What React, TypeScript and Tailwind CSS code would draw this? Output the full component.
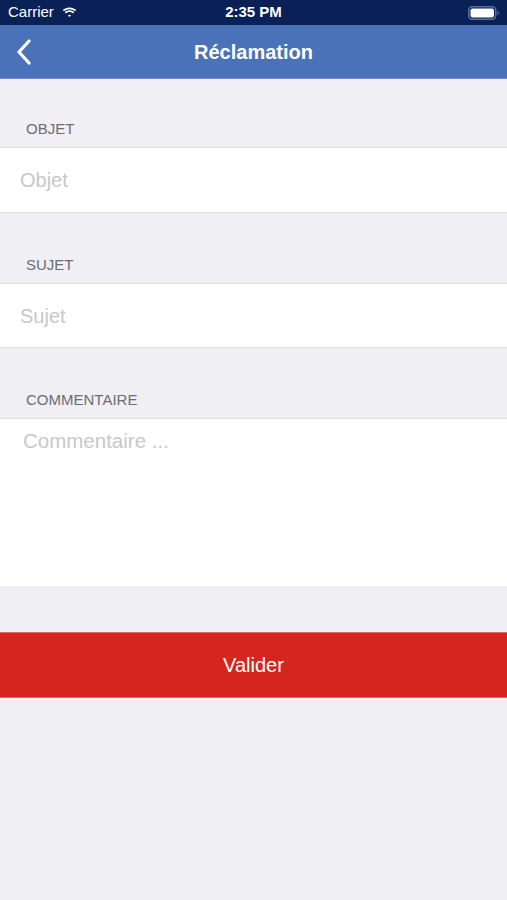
import React from "react";

function Wifi() {
  return (
    <svg width="15" height="11" viewBox="0 0 17 12" fill="white">
      <path d="M8.5 2.2c2.4 0 4.6.9 6.3 2.5l1.3-1.4C14.1 1.4 11.4.3 8.5.3S2.9 1.4.9 3.3l1.3 1.4C3.9 3.1 6.1 2.2 8.5 2.2z" />
      <path d="M8.5 5.4c1.5 0 2.9.6 4 1.6l1.3-1.4C12.4 4.3 10.5 3.5 8.5 3.5S4.6 4.3 3.2 5.6L4.5 7c1.1-1 2.5-1.6 4-1.6z" />
      <path d="M8.5 8.5c.7 0 1.3.3 1.8.7l-1.8 1.9-1.8-1.9c.5-.4 1.1-.7 1.8-.7z" />
    </svg>
  );
}

function Battery() {
  return (
    <svg width="32" height="14" viewBox="0 0 32 14">
      <rect x="0.75" y="0.75" width="27" height="12.5" rx="3.5" fill="none" stroke="#5a6f9a" strokeWidth="1.5" />
      <rect x="2.5" y="2.5" width="23.5" height="9" rx="2" fill="white" />
      <path d="M29.5 4.7v4.6c.9-.3 1.5-1.2 1.5-2.3s-.6-2-1.5-2.3z" fill="#5a6f9a" />
    </svg>
  );
}

function Section({ label, first }: { label: string; first?: boolean }) {
  return (
    <div className={`${first ? "h-[68px]" : "h-[70px]"} flex items-end px-[26px] pb-[9px]`}>
      <span className="text-[15px] leading-[18px] text-[#6d6d72]">{label}</span>
    </div>
  );
}

export default function App() {
  return (
    <div
      className="w-[507px] h-[900px] bg-[#efeff4] flex flex-col"
      style={{ fontFamily: '"Liberation Sans", Arial, sans-serif' }}
    >
      <div className="h-[25px] bg-[#0a2157] flex items-center px-[8px] relative text-white">
        <span className="text-[15px]">Carrier</span>
        <span className="ml-[8px] flex items-center">
          <Wifi />
        </span>
        <span className="absolute left-0 right-0 text-center text-[15px] font-bold pointer-events-none">
          2:35 PM
        </span>
        <span className="ml-auto mr-[-1px] flex items-center">
          <Battery />
        </span>
      </div>

      <div className="h-[54px] bg-[#4a72b8] border-b border-[#6a8cc8] flex items-center relative">
        <svg className="ml-[16px]" width="16" height="26" viewBox="0 0 16 26" fill="none">
          <path d="M13 2L3 13l10 11" stroke="white" strokeWidth="3.2" strokeLinecap="round" strokeLinejoin="round" />
        </svg>
        <span className="absolute left-0 right-0 text-center text-white text-[20px] font-bold">
          Réclamation
        </span>
      </div>

      <Section label="OBJET" first />
      <div className="h-[66px] bg-white border-y border-[#e0e0e5] flex items-center px-[20px]">
        <input
          className="w-full outline-none text-[20px] text-[#333] placeholder:text-[#c7c7cd] bg-transparent"
          placeholder="Objet"
        />
      </div>

      <Section label="SUJET" />
      <div className="h-[65px] bg-white border-y border-[#e0e0e5] flex items-center px-[20px]">
        <input
          className="w-full outline-none text-[20px] text-[#333] placeholder:text-[#c7c7cd] bg-transparent"
          placeholder="Sujet"
        />
      </div>

      <Section label="COMMENTAIRE" />
      <div className="h-[168px] bg-white border-t border-[#e0e0e5] px-[23px] pt-[10px]">
        <textarea
          className="w-full h-full resize-none outline-none text-[20.5px] leading-[24px] text-[#333] placeholder:text-[#c7c7cd] bg-transparent"
          placeholder="Commentaire ..."
        />
      </div>

      <div className="h-[46px]" />
      <button className="h-[66px] w-full bg-[#d6241f] border-y border-[#e06a66] text-white text-[20px]">
        Valider
      </button>
    </div>
  );
}
